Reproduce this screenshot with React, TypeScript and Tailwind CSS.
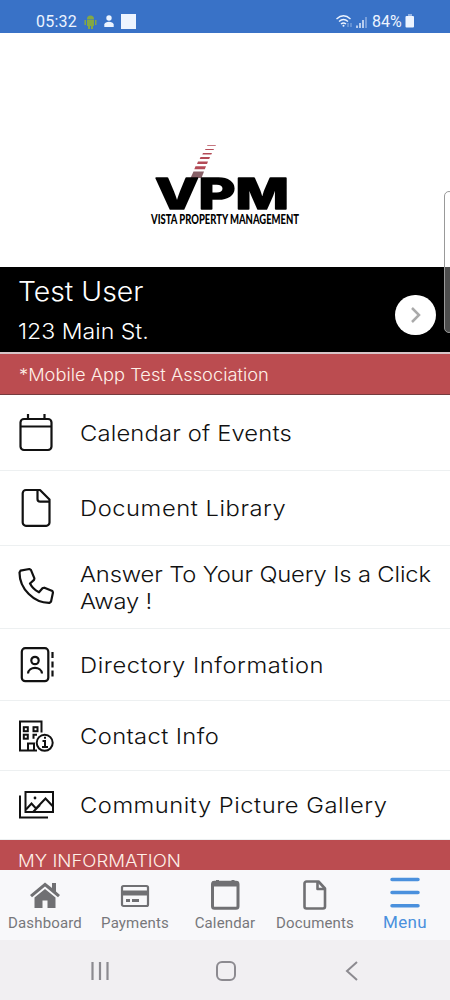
import type { ReactNode } from 'react'
import { clsx } from 'clsx'

const CalendarIcon = () => (
  <svg width="36" height="40" viewBox="0 0 36 40" fill="none" stroke="#111" strokeWidth="2.200">
    <rect x="2.500" y="6" width="31" height="31" rx="3.500" />
    <path d="M2.500 13.500h31M10 1v5M26.500 1v5" />
  </svg>
)

const DocumentIcon = () => (
  <svg width="36" height="40" viewBox="0 0 36 40" fill="none" stroke="#111" strokeWidth="2.200" strokeLinejoin="round">
    <path d="M8 2h14l9.500 9.500V34.500a3.300 3.300 0 0 1-3.300 3.300H8a3.300 3.300 0 0 1-3.300-3.300V5.300A3.300 3.300 0 0 1 8 2Z" />
    <path d="M19.500 2v9a2.700 2.700 0 0 0 2.700 2.700h9" />
  </svg>
)

const PhoneIcon = () => (
  <svg className="-mt-0.5" width="36" height="38" viewBox="0 0 36 38" fill="none" stroke="#111" strokeWidth="2.200" strokeLinejoin="round">
    <path d="M2.500 3.700 11.300 2l1.600.9 3.500 8.400-.4 1.600-4 3.600c2.200 4.300 4.700 6.600 9 8.800l3.700-4.200 1.700-.4 8 3.400.6 1.400-2 9.200-1.500 1.200C16.300 36.200 1.500 22.200 1.500 5.500Z" />
  </svg>
)

const DirectoryIcon = () => (
  <svg width="36" height="36" viewBox="0 0 36 36" fill="none" stroke="#111" strokeWidth="2.200">
    <rect x="3.800" y="1.200" width="26.500" height="33" rx="3.500" />
    <circle cx="17" cy="13.500" r="3.700" />
    <path d="M10 26.500c.5-7.500 13.500-7.500 14 0" />
    <path d="M34.500 5v6M34.500 14.500v6M34.500 23.500v6" />
  </svg>
)

const BuildingIcon = () => (
  <svg width="36" height="34" viewBox="0 0 36 34" fill="none" stroke="#111" strokeWidth="2">
    <path d="M19 31.500H2V2.500h21.500v11" />
    <rect x="5.800" y="8.200" width="4" height="4" />
    <rect x="15.500" y="8.200" width="4" height="4" />
    <rect x="5.800" y="15.700" width="4" height="4" />
    <path d="M19 15.700h-3.500v4M10 31v-6.500h6V31" />
    <circle cx="26.700" cy="23.800" r="8" />
    <path d="M24.500 22h2.500v6M24 28h6M26 18.700h2" />
  </svg>
)

const GalleryIcon = () => (
  <svg width="36" height="30" viewBox="0 0 36 30" fill="none" stroke="#111" strokeWidth="2">
    <rect x="7.500" y="2" width="27.500" height="20" />
    <path d="M2 5.500V27.500h28M8 19.500l5.500-6 4.500 5 9.500-10 7.500 8M15 22l7-7" />
    <circle cx="17" cy="8" r="1.400" fill="#111" stroke="none" />
  </svg>
)

const items: { name: string; icon: ReactNode; height: string; text: string }[] = [
  { name: 'Calendar of Events', icon: <CalendarIcon />, height: 'h-[76px]', text: 'tracking-[0.15px]' },
  { name: 'Document Library', icon: <DocumentIcon />, height: 'h-[75px]', text: 'tracking-[0.5px]' },
  { name: 'Answer To Your Query Is a Click Away !', icon: <PhoneIcon />, height: 'h-[83px]', text: 'tracking-[-0.13px] w-[340px]' },
  { name: 'Directory Information', icon: <DirectoryIcon />, height: 'h-[72px]', text: 'tracking-[0.5px]' },
  { name: 'Contact Info', icon: <BuildingIcon />, height: 'h-[70px]', text: 'tracking-[0.35px]' },
  { name: 'Community Picture Gallery', icon: <GalleryIcon />, height: 'h-[69px]', text: 'tracking-[0.46px]' },
]

const tabs: { name: string; icon: ReactNode }[] = [
  {
    name: 'Dashboard',
    icon: (
      <svg width="32" height="32" viewBox="0 0 32 32" fill="#707073">
        <path d="M16 4.500 1 17l2 2.200L16 8.500l13 10.700L31 17l-4-3.500V5h-4v5Z" />
        <path d="M16 11 5.500 19.500V30h8v-7.500h5V30h8V19.500Z" />
      </svg>
    ),
  },
  {
    name: 'Payments',
    icon: (
      <svg width="30" height="32" viewBox="0 0 30 32" fill="none" stroke="#707073" strokeWidth="2.200">
        <rect x="2" y="8" width="26" height="20" rx="1.500" />
        <path d="M2 15h26" strokeWidth="5" />
        <path d="M6 22.500h4M12 22.500h7" strokeWidth="3" />
      </svg>
    ),
  },
  {
    name: 'Calendar',
    icon: (
      <svg width="30" height="32" viewBox="0 0 30 32" fill="none" stroke="#707073" strokeWidth="3">
        <rect x="2.500" y="4.200" width="25.500" height="26" rx="2" />
        <path d="M2 6h26.500" strokeWidth="5" />
        <path d="M7.500 2v4M23 2v4" />
      </svg>
    ),
  },
  {
    name: 'Documents',
    icon: (
      <svg width="26" height="32" viewBox="0 0 26 32" fill="none" stroke="#707073" strokeWidth="2.600" strokeLinejoin="round">
        <path d="M4.500 3.500h12L23 10.500v18a2 2 0 0 1-2 2H4.500a2 2 0 0 1-2-2v-23a2 2 0 0 1 2-2Z" />
        <path d="M15.500 3.500V11H23" />
      </svg>
    ),
  },
]

function StatusBar() {
  return (
    <header className="flex h-[33px] items-center justify-between bg-[#3972c7] pt-[10px] pr-[35px] pl-9 font-['Roboto',sans-serif] text-base text-[#edf4ff]">
      <div className="flex items-center gap-[7px]">
        <span className="w-[41px] tracking-[0.2px]">05:32</span>
        <svg width="13" height="14" viewBox="0 0 13 14" fill="#83a845">
          <path d="M3 4a3.500 3.500 0 0 1 7 0ZM3 4.500h7V11H9v3H7v-3H6v3H4v-3H3ZM.5 5H2v5H.5ZM11 5h1.500v5H11Z" />
        </svg>
        <svg className="-mt-0.5" width="10" height="12" viewBox="0 0 10 12" fill="currentColor">
          <circle cx="5" cy="3" r="2.700" />
          <path d="M.3 12V9.500C1 5.800 9 5.800 9.700 9.500V12Z" />
        </svg>
        <div className="size-[15px] bg-[#edf4ff]" />
      </div>
      <div className="flex items-center">
        <svg className="mr-1" width="32" height="15" viewBox="0 0 32 15" fill="none" stroke="currentColor" strokeWidth="1.400">
          <path d="M.5 5Q7.500-1.500 14.500 5M3 7.500q4.500-4 9 0M5 10q2.500-2.200 5 0" />
          <circle cx="7.500" cy="11.800" r="1" fill="currentColor" stroke="none" />
          <path d="M12 9v4M15 9v4" strokeWidth="1" opacity=".5" />
          <path d="M21 11.500v2.500M24 9v5M27 6v8" />
          <path d="M30 3v11" opacity=".5" />
        </svg>
        <span className="w-[33px]">84%</span>
        <svg className="-mt-0.5" width="10" height="14" viewBox="0 0 10 14" fill="currentColor">
          <path d="M3 0h4v2H3Z" opacity=".5" />
          <rect x=".5" y="2" width="8.500" height="11.500" rx="1" />
        </svg>
      </div>
    </header>
  )
}

function Logo() {
  return (
    <svg width="154" height="84" viewBox="0 0 154 84" className="mt-0.5">
      <g fill="#b44b57">
        <path d="M59.500 1h8.500l-.5.700h-8.500ZM57.500 5h8.500l-.5 1H57ZM55 9h9l-.7 1.500h-9ZM52.500 13h9.500l-.8 2h-9.500ZM50 17.500h10l-1 2.500H49ZM47.500 22.300h10.500l-1.200 3h-10.500Z" />
        <path d="M45.500 27.500H56L53.500 34h-11Z" fill="#886168" />
      </g>
      <text
        x="7"
        y="64.500"
        fontFamily="Inter, sans-serif"
        fontWeight="800"
        fontSize="42.500"
        stroke="#000"
        strokeWidth="1.500"
        strokeLinejoin="round"
        textLength="134"
        lengthAdjust="spacingAndGlyphs"
      >
        VPM
      </text>
      <text x="3" y="79.500" fontFamily="Lato, sans-serif" fontWeight="900" fontSize="12.500" textLength="148" lengthAdjust="spacingAndGlyphs">
        VISTA PROPERTY MANAGEMENT
      </text>
    </svg>
  )
}

export default function App() {
  return (
    <div className="relative flex h-[1000px] w-[450px] flex-col overflow-hidden bg-white font-['Inter',sans-serif] text-[#111]">
      <StatusBar />

      {/* LOGO */}
      <div className="flex h-[234px] justify-center pt-[109px]">
        <Logo />
      </div>

      {/* USER */}
      <div className="flex h-[87px] items-center justify-between border-b-2 border-[#d8c4c7] bg-black pr-3.5 pl-[18px] font-light text-white">
        <div className="origin-left scale-x-105 pt-0.5">
          <div className="text-[27px] leading-[41px]">Test User</div>
          <div className="text-[22px] leading-[38px]">123 Main St.</div>
        </div>
        <button className="mt-2.5 flex h-10 w-[41px] items-center justify-center rounded-full bg-white">
          <svg width="12" height="18" viewBox="0 0 12 18" fill="none" stroke="#aaa" strokeWidth="2.500">
            <path d="m2 2 7 7-7 7" />
          </svg>
        </button>
      </div>

      <div className="flex h-[41px] items-center border-b border-[#753b3e] bg-[#bb4c50] pt-1 pl-[19px] text-[17px] font-light text-[#fff0e8]">
        <span className="origin-left scale-x-[1.075]">*Mobile App Test Association</span>
      </div>

      {/* MENU */}
      <nav>
        {items.map((item) => (
          <a key={item.name} className={clsx('flex items-center border-b border-[#edf0f1] pl-[18px]', item.height)}>
            <span className="w-[62px] shrink-0">{item.icon}</span>
            <span className={clsx('origin-left scale-x-[1.08] pt-0.5 text-[22px] leading-[27.500px] font-light', item.text)}>{item.name}</span>
          </a>
        ))}
      </nav>

      <div className="h-[30px] shrink-0 overflow-hidden bg-[#bb4c50] pt-2 pl-[18px] text-[17px] leading-[26px] font-light text-[#fff0e8]">
        <span className="inline-block origin-left scale-x-[1.095]">MY INFORMATION</span>
      </div>

      {/* TABS */}
      <footer className="grid h-[70px] shrink-0 grid-cols-5 bg-[#f8f8fa] font-['Roboto',sans-serif] text-[15px] text-[#77777b]">
        {tabs.map((tab) => (
          <div key={tab.name} className="flex flex-col items-center pt-2">
            <div className="h-[33px]">{tab.icon}</div>
            <span className="leading-6 tracking-[0.15px]">{tab.name}</span>
          </div>
        ))}
        <div className="flex flex-col items-center pt-[7px] text-[#4a90dd]">
          <svg width="30" height="32" viewBox="0 0 30 32" stroke="currentColor" strokeWidth="3.500" strokeLinecap="round">
            <path d="M2 2.500h26M2 15.500h26M2 28.700h26" />
          </svg>
          <span className="text-[17px] leading-[26px] tracking-[0.4px]">Menu</span>
        </div>
      </footer>

      {/* SYSTEM NAVIGATION */}
      <div className="flex h-[60px] shrink-0 items-center bg-[#f1eff2] pt-0.5 pl-[90px] text-[#8c8a90]">
        <svg width="20" height="20" viewBox="0 0 20 20" stroke="currentColor" strokeWidth="2.200">
          <path d="M2.500 1v18M10 1v18M17.500 1v18" />
        </svg>
        <svg className="ml-[106px]" width="20" height="20" viewBox="0 0 20 20" fill="none" stroke="currentColor" strokeWidth="2">
          <rect x="1" y="1" width="18" height="18" rx="5" />
        </svg>
        <svg className="ml-[109px]" width="13" height="20" viewBox="0 0 13 20" fill="none" stroke="currentColor" strokeWidth="2">
          <path d="M12 1 2 10l10 9" />
        </svg>
      </div>

      {/* EDGE HANDLE */}
      <div className="absolute top-[191px] -right-1 h-[142px] w-[10px] rounded-lg border border-[#999] bg-white/30" />
    </div>
  )
}
